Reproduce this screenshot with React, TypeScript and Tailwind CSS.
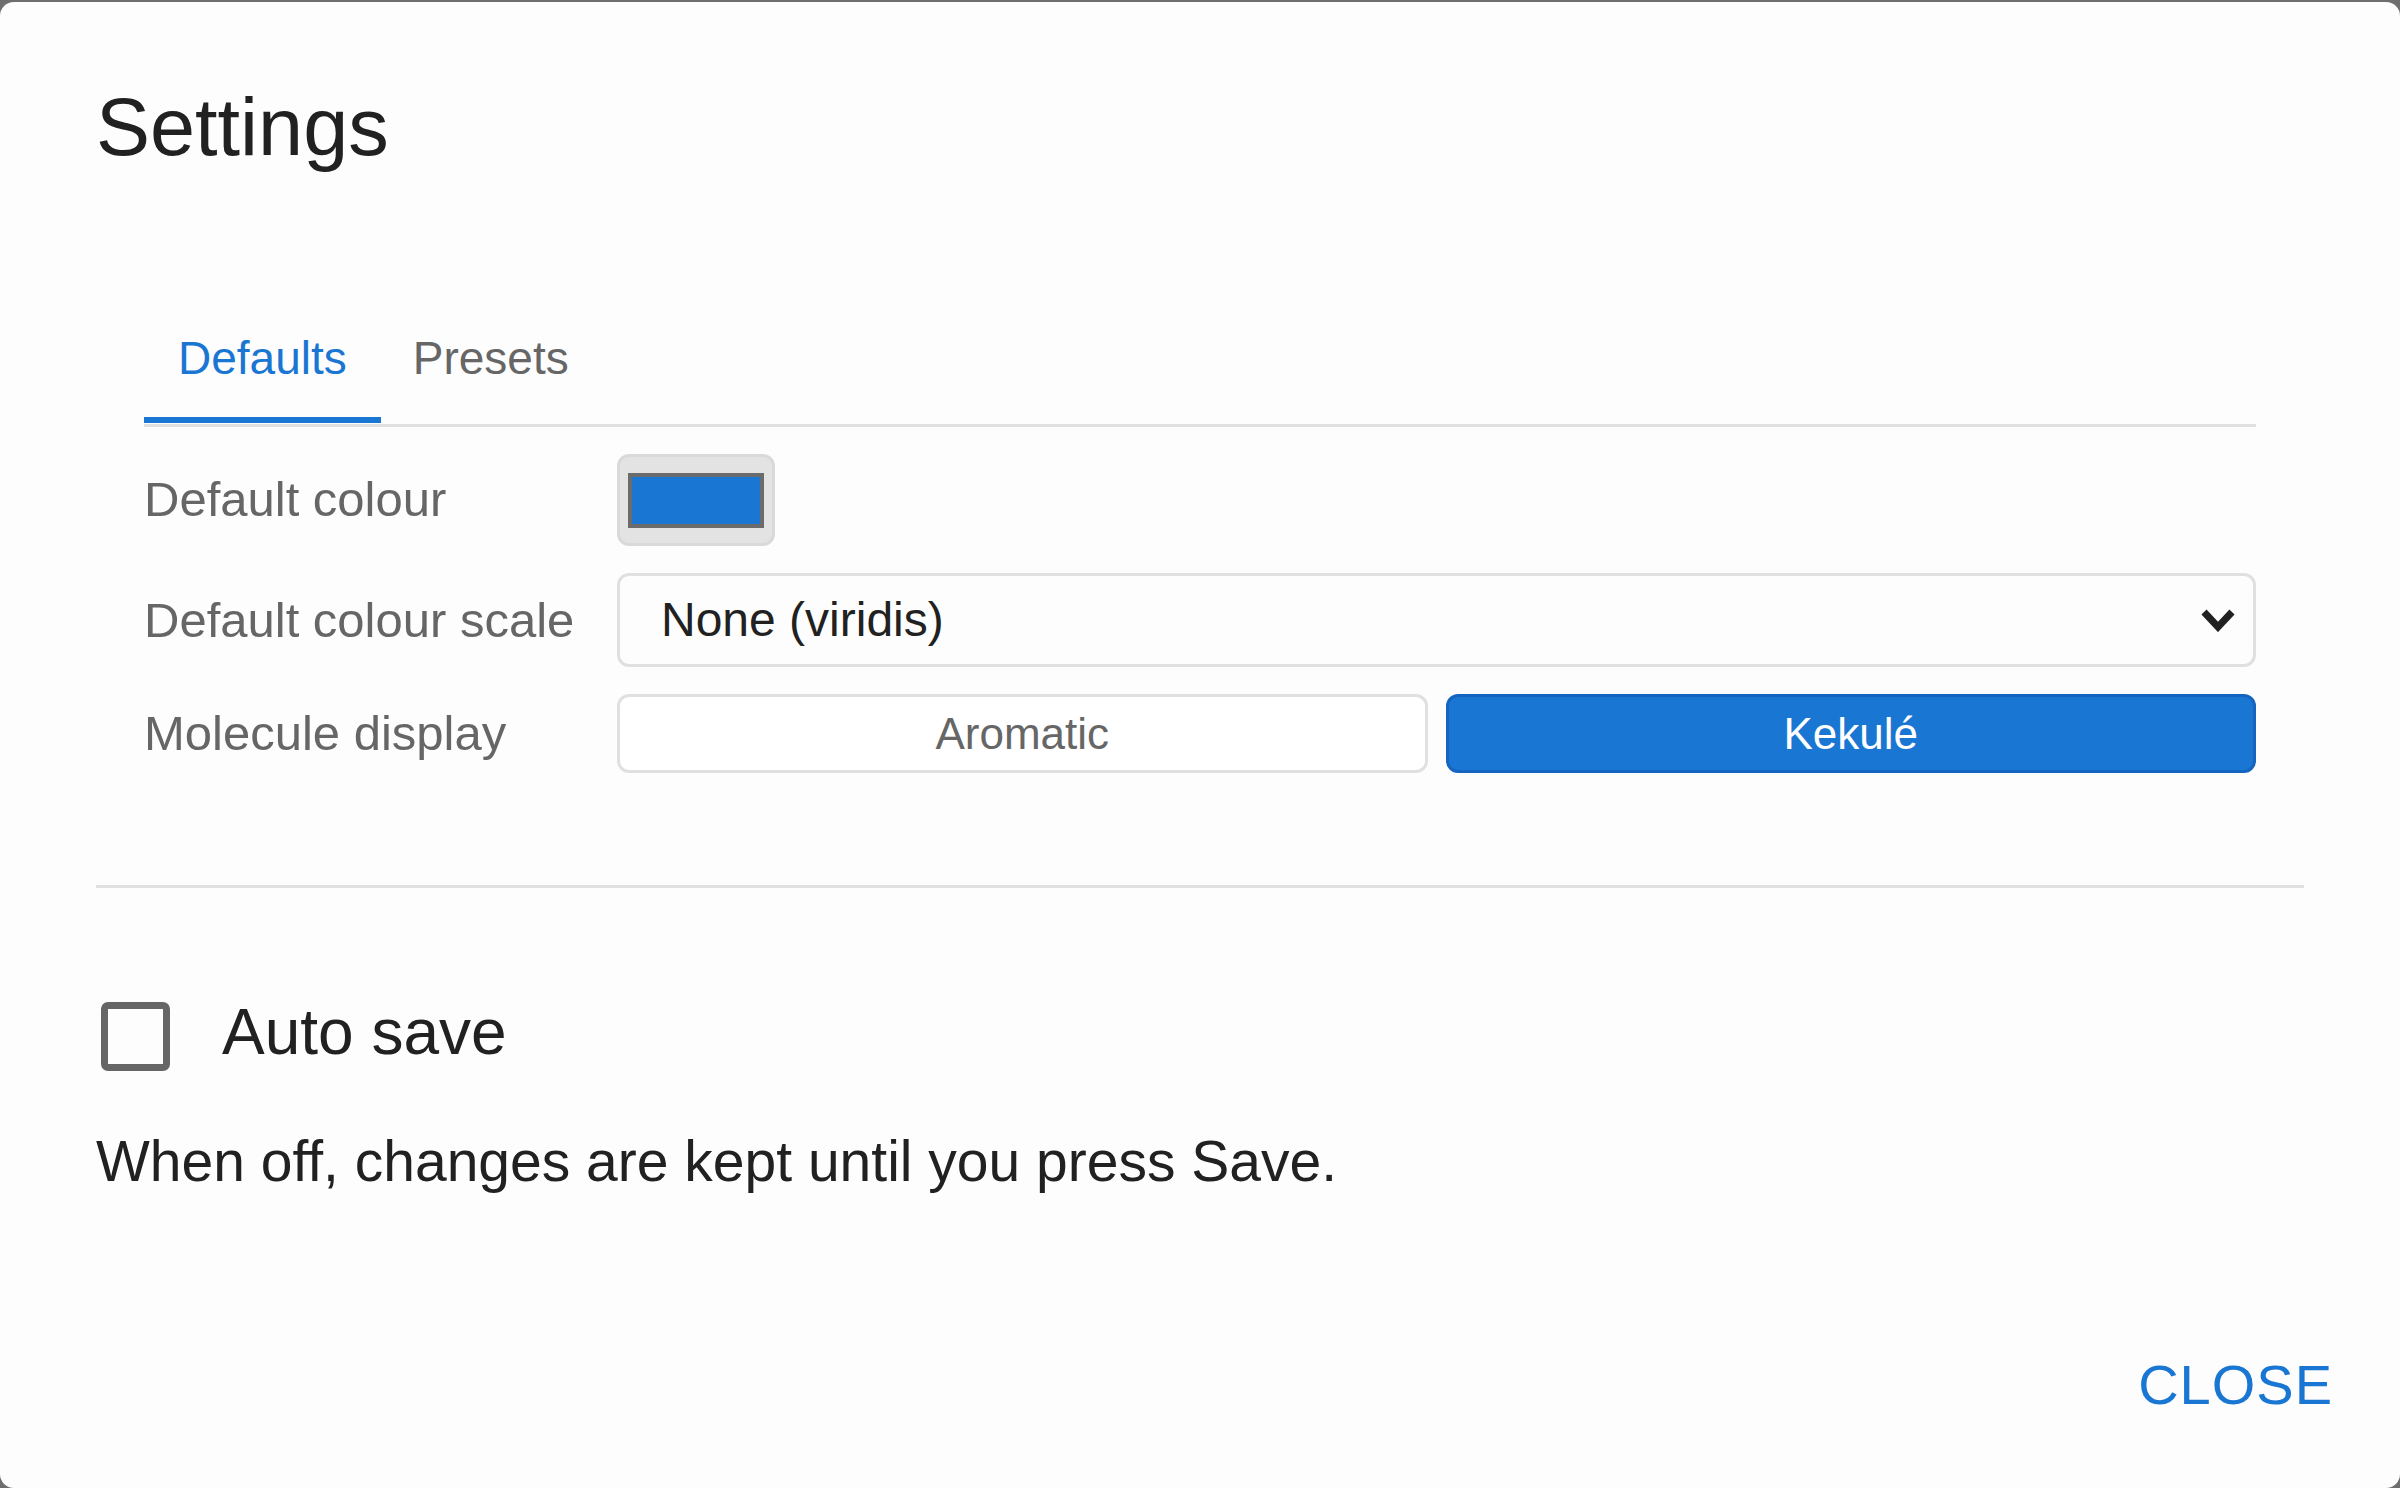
export default function App() {
  const font = { fontFamily: '"Liberation Sans", Arial, sans-serif' }
  return (
    <div className="w-[2400px] h-[1488px] bg-[#6e6e6e] pt-[2px] overflow-hidden" style={font}>
      <div className="h-full rounded-[14px] bg-[#fdfdfd] flex flex-col px-[96px] pt-[77px]">
        {/* Title */}
        <h1 className="text-[81px] leading-[96px] text-[#212121]">Settings</h1>

        {/* Tabs panel */}
        <div className="mt-[117px] px-[48px]">
          <div className="flex h-[132px] border-b-[3px] border-[#e0e0e0] box-content">
            <div className="relative flex items-center px-[34px] text-[46px] text-[#1976d2]">
              Defaults
              <div className="absolute left-0 right-0 bottom-[1px] h-[6px] bg-[#1976d2]" />
            </div>
            <div className="flex items-center px-[32px] text-[46px] text-[#666666]">Presets</div>
          </div>

          <div className="mt-[27px] grid grid-cols-[473px_1fr] gap-y-[27px] items-center">
            <div className="text-[49px] text-[#666666]">Default colour</div>
            <div className="h-[92px] w-[158px] rounded-[12px] border-[3px] border-[#d9d9d9] bg-[#e3e3e3] flex items-center justify-center">
              <div className="w-[136px] h-[55px] border-[4px] border-[#6b6b6b] bg-[#1976d2]" />
            </div>

            <div className="text-[49px] text-[#666666] mt-[2px]">Default colour scale</div>
            <div className="h-[94px] rounded-[12px] border-[3px] border-[#e0e0e0] flex items-center justify-between pl-[41px] pr-[17px]">
              <span className="text-[48px] text-[#212121]">None (viridis)</span>
              <svg width="36" height="24" viewBox="0 0 36 24">
                <polyline points="4,4 18,19 32,4" fill="none" stroke="#212121" strokeWidth="7" />
              </svg>
            </div>

            <div className="text-[49px] text-[#666666]">Molecule display</div>
            <div className="flex gap-[18px]">
              <div className="flex-1 h-[79px] rounded-[12px] border-[3px] border-[#e0e0e0] bg-white flex items-center justify-center text-[44px] text-[#666666]">
                Aromatic
              </div>
              <div className="flex-1 h-[79px] rounded-[12px] border-[3px] border-[#1565c0] bg-[#1976d2] flex items-center justify-center text-[44px] text-white">
                Kekulé
              </div>
            </div>
          </div>
        </div>

        {/* Divider */}
        <div className="mt-[112px] h-[3px] bg-[#e0e0e0]" />

        {/* Auto save */}
        <div className="mt-[104px] flex items-center gap-[52px] pl-[5px]">
          <div className="w-[69px] h-[69px] rounded-[7px] border-[7px] border-[#666666]" />
          <span className="text-[64px] text-[#212121] -mt-[8px]">Auto save</span>
        </div>
        <p className="mt-[47px] text-[57px] leading-[68px] text-[#212121]">
          When off, changes are kept until you press Save.
        </p>

        {/* Actions */}
        <div className="mt-auto mb-[69px] -mr-[29px] flex justify-end">
          <span className="text-[56px] leading-[68px] tracking-[1px] text-[#1976d2]">CLOSE</span>
        </div>
      </div>
    </div>
  )
}
